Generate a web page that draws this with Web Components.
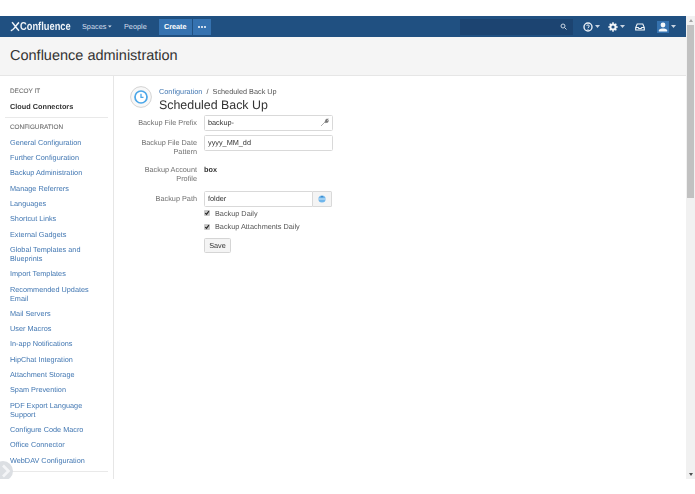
<!DOCTYPE html>
<html lang="en"><head><meta charset="utf-8"><title>Scheduled Back Up</title>
<style>
html,body{margin:0;padding:0;height:494px;overflow:hidden;background:#fff;font-family:"Liberation Sans",Arial,sans-serif;color:#333;text-rendering:geometricPrecision}
body{display:flex;flex-direction:column}
</style></head><body>
<app-shell></app-shell>
<script>
function def(name,html,init){
  customElements.define(name,class extends HTMLElement{
    constructor(){super();this.attachShadow({mode:'open'}).innerHTML=html}
    connectedCallback(){if(init)init(this)}
  });
}
const caret=c=>`<svg width="5" height="3" viewBox="0 0 5 3"><path d="M0 0h5L2.5 3z" fill="${c}"/></svg>`;

def('app-header',`<style>
:host{display:flex;align-items:center;height:21px;background:#205081;color:#d2dcea;font-size:7.3px;box-sizing:border-box;flex:none;padding:0 10px}
.logo{display:flex;align-items:center;width:72px;color:#eef3f8;flex:none}
.logo svg{flex:none}
.logo span{display:inline-block;font-size:11.5px;font-weight:700;transform:scaleX(.81);transform-origin:0 50%;white-space:nowrap}
.nav{display:flex;align-items:center}
.i{display:flex;align-items:center;gap:2px}
.create{background:#3572b0;color:#fff;font-weight:700;height:16px;display:flex;align-items:center;justify-content:center;width:33px;margin-left:12px}
.more{background:#3572b0;color:#fff;height:16px;width:18px;margin-left:1px;display:flex;align-items:center;justify-content:center;gap:1px}
.more b{width:2px;height:2px;border-radius:50%;background:#fff}
.sp{flex:1}
.search{width:113px;height:16px;background:#1c4471;display:flex;align-items:center;justify-content:flex-end;padding-right:6px;box-sizing:border-box;margin-right:10px}
.ic{display:flex;align-items:center;gap:2px}
</style>
<div class="logo"><svg width="10" height="11" viewBox="0 0 10 11"><path d="M2 1.300C4 3 6 7 9 9.700M9 1.300C7.500 2.500 5.800 5.200 4.500 6.900 3.500 8.200 2.300 9.300 .8 9.700" fill="none" stroke="#eef3f8" stroke-width="1.500"/></svg><span>Confluence</span></div>
<div class="nav"><span class="i" style="width:30px">Spaces ${caret('#d2dcea')}</span><span class="i" style="margin-left:12px">People</span><span class="create">Create</span><span class="more"><b></b><b></b><b></b></span></div>
<div class="sp"></div>
<div class="search"><svg width="7" height="7" viewBox="0 0 7 7"><circle cx="3" cy="3" r="2" fill="none" stroke="#c9d4e2" stroke-width="1"/><path d="M4.500 4.500 6.500 6.500" stroke="#c9d4e2" stroke-width="1"/></svg></div>
<span class="ic" style="margin-right:8px"><svg width="10" height="10" viewBox="0 0 10 10"><circle cx="5" cy="5" r="4" fill="none" stroke="#e8eef5" stroke-width="1.400"/><path d="M3.600 3.800C3.800 2.600 6.300 2.600 6.300 4 6.300 5 5 5 5 6.200" fill="none" stroke="#e8eef5" stroke-width="1"/><circle cx="5" cy="7.500" r=".6" fill="#e8eef5"/></svg>${caret('#c9d4e2')}</span>
<span class="ic" style="margin-right:10px"><svg width="10" height="10" viewBox="0 0 10 10"><circle cx="5" cy="5" r="2.600" fill="none" stroke="#f1f5f9" stroke-width="2"/><path d="M5 .3v2M5 7.700v2M.3 5h2M7.700 5h2M1.700 1.700l1.400 1.400M6.900 6.900l1.400 1.400M8.300 1.700 6.900 3.100M3.100 6.900 1.700 8.300" stroke="#f1f5f9" stroke-width="1.500"/></svg>${caret('#c9d4e2')}</span>
<span class="ic" style="margin-right:12px"><svg width="10" height="8" viewBox="0 0 10 8"><path d="M2.200 1h5.600L9.300 4.500V7H.7V4.500zM.7 4.500h2.600l.5 1h2.400l.5-1h2.600" fill="none" stroke="#f1f5f9" stroke-width="1.100"/></svg></span>
<span class="ic"><svg width="12" height="12" viewBox="0 0 12 12"><rect width="12" height="12" fill="#3572b0"/><circle cx="6" cy="4" r="2.400" fill="#f4f7fa"/><path d="M1.800 10.500V9C3 7.800 4.500 7.600 6 7.600S9 7.800 10.200 9v1.500z" fill="#f4f7fa"/></svg>${caret('#c9d4e2')}</span>`);

def('page-title',`<style>
:host{display:flex;align-items:center;height:39px;box-sizing:border-box;background:#f5f5f5;border-bottom:1px solid #e6e6e6;padding:0 0 0 10px;font-size:14.500px;color:#333;flex:none}
</style><slot></slot>`);

def('side-head',`<style>:host{display:block;font-size:6.400px;color:#707070;line-height:11px;padding:0 0 2px;-webkit-text-stroke:.1px #707070}</style><slot></slot>`);
def('side-link',`<style>:host{display:block;font-size:7.300px;line-height:9.100px;padding:3.100px 0;color:#4277b2}
:host([current]){color:#333;font-weight:700}</style><slot></slot>`);
def('side-sep',`<style>:host{display:block;height:1px;background:#e9e9e9;margin:3px 0 3.500px -5px;width:103px}</style>`);

def('admin-sidebar',`<style>
:host{display:block;width:114px;box-sizing:border-box;border-right:1px solid #e6e6e6;padding:10px 5px 0 10px;flex:none;overflow:hidden}
</style><slot></slot>`);

def('form-row',`<style>
:host{display:grid;grid-template-columns:66px 1fr;column-gap:7px;align-items:start;margin-left:17px}
.l{font-size:7.300px;line-height:9.300px;color:#707070;text-align:right;padding-top:var(--lt,3px)}
.c{min-width:0;font-size:7.300px}
</style><div class="l"><slot name="label"></slot></div><div class="c"><slot></slot></div>`);

def('text-input',`<style>
:host{display:flex;align-items:center;width:129px;height:15.500px;box-sizing:border-box;border:1px solid #d9d9d9;border-radius:1.500px;background:#fff;font-size:7.300px;color:#333;padding:0 3px;justify-content:space-between}
</style><slot></slot><slot name="icon"></slot>`);

def('check-row',`<style>
:host{display:flex;align-items:center;gap:5px;font-size:7.300px;color:#555;height:13.500px}
svg{flex:none}
</style><svg width="6" height="6" viewBox="0 0 6 6"><rect width="6" height="6" rx="1" fill="#c8c8c8"/><path d="M1.200 3 2.500 4.400 4.900 1.200" fill="none" stroke="#222" stroke-width="1.100"/></svg><slot></slot>`);

def('aui-button',`<style>
:host{display:inline-flex;align-items:center;justify-content:center;height:15.500px;width:27px;box-sizing:border-box;border:1px solid #d5d5d5;border-radius:1.500px;background:#f4f4f4;font-size:7.300px;color:#333}
</style><slot></slot>`);

def('page-heading',`<style>
:host{display:flex;align-items:flex-start;gap:7px;margin-left:16px}
.t{display:flex;flex-direction:column;margin-top:1px}
.bc{font-size:7.300px;line-height:10px;color:#555;margin-bottom:1px}
.bc a{color:#4277b2}
.h{font-size:12.400px;line-height:14px;color:#333}
svg{flex:none}
</style>
<svg width="22" height="22" viewBox="0 0 22 22"><circle cx="11" cy="11" r="10.400" fill="#f8f8f8" stroke="#cfcfcf" stroke-width=".9"/><circle cx="11" cy="11" r="6" fill="#fff" stroke="#4aa6e8" stroke-width="1.700"/><path d="M11 7.800V11.300H13.500" fill="none" stroke="#4aa6e8" stroke-width="1.300"/></svg>
<div class="t"><div class="bc"><a>Configuration</a>&nbsp; /&nbsp; Scheduled Back Up</div><div class="h">Scheduled Back Up</div></div>`);

def('backup-form',`<style>
:host{display:block;padding:3px 0 0}
.g{display:flex;flex-direction:column}
.path{display:flex;width:128px}
.pick{width:19px;height:15.500px;box-sizing:border-box;border:1px solid #d9d9d9;border-left:none;background:#f4f4f4;display:flex;align-items:center;justify-content:center;border-radius:0 1.500px 1.500px 0}
</style>
<div class="g">
<form-row style="height:20px"><span slot="label">Backup File Prefix</span><text-input>backup-<svg slot="icon" width="9" height="9" viewBox="0 0 9 9"><path d="M1 8 5.500 3.500M5 4 6 1.300 8.300 1 6.900 2.400 7.600 3.200 8.500 2.400 7.800 4.300 5.500 4.700z" fill="#777" stroke="#777" stroke-width=".6"/></svg></text-input></form-row>
<form-row style="height:30px"><span slot="label">Backup File Date<br>Pattern</span><text-input>yyyy_MM_dd</text-input></form-row>
<form-row style="height:26px;--lt:0"><span slot="label">Backup Account<br>Profile</span><span style="font-weight:700;display:block;line-height:9.300px">box</span></form-row>
<form-row style="height:15.500px"><span slot="label">Backup Path</span><div class="path"><text-input style="width:109px;border-radius:1.500px 0 0 1.500px">folder</text-input><div class="pick"><svg width="8" height="8" viewBox="0 0 8 8"><circle cx="4" cy="4" r="3.600" fill="#6fb6ec"/><path d="M.6 4h6.800" stroke="#e8f4fc" stroke-width=".8"/><path d="M2.500 2.300h3L4 .8z" fill="#2f7fc2"/></svg></div></div></form-row>
<form-row style="height:13.500px"><span slot="label"></span><check-row>Backup Daily</check-row></form-row>
<form-row style="height:13.500px"><span slot="label"></span><check-row>Backup Attachments Daily</check-row></form-row>
<form-row style="margin-top:4px"><span slot="label"></span><aui-button>Save</aui-button></form-row>
</div>`);

def('fake-scrollbar',`<style>
:host{display:flex;flex-direction:column;width:9px;flex:none;background:#f1f1f1}
.a{height:9px;display:flex;align-items:center;justify-content:center;flex:none}
.t{height:173px;background:#c1c1c1;flex:none;margin:0 1px}
.s{flex:1}
</style><div class="a"><svg width="4" height="3" viewBox="0 0 4 3"><path d="M0 3 2 0 4 3z" fill="#a3a3a3"/></svg></div><div class="t"></div><div class="s"></div><div class="a"><svg width="4" height="3" viewBox="0 0 4 3"><path d="M0 0 2 3 4 0z" fill="#505050"/></svg></div>`);

def('app-shell',`<style>
:host{display:block;height:494px;width:695px;box-sizing:border-box;padding:16px 0 15px;filter:blur(.35px)}
.frame{display:flex;height:100%;position:relative;overflow:hidden}
.main{flex:1;min-width:0;display:flex;flex-direction:column}
.body{flex:1;display:flex;min-height:0}
.content{flex:1;padding-top:10px}
.collapse{position:absolute;left:-7px;top:445px;width:20px;height:20px;border-radius:50%;background:#dcdfe3;display:flex;align-items:center;justify-content:center}
</style>
<div class="frame"><div class="main">
<app-header></app-header>
<page-title>Confluence administration</page-title>
<div class="body">
<admin-sidebar>
<side-head>DECOY IT</side-head>
<side-link current>Cloud Connectors</side-link>
<side-sep></side-sep>
<side-head>CONFIGURATION</side-head>
<side-link>General Configuration</side-link>
<side-link>Further Configuration</side-link>
<side-link>Backup Administration</side-link>
<side-link>Manage Referrers</side-link>
<side-link>Languages</side-link>
<side-link>Shortcut Links</side-link>
<side-link>External Gadgets</side-link>
<side-link>Global Templates and Blueprints</side-link>
<side-link>Import Templates</side-link>
<side-link>Recommended Updates Email</side-link>
<side-link>Mail Servers</side-link>
<side-link>User Macros</side-link>
<side-link>In-app Notifications</side-link>
<side-link>HipChat Integration</side-link>
<side-link>Attachment Storage</side-link>
<side-link>Spam Prevention</side-link>
<side-link>PDF Export Language Support</side-link>
<side-link>Configure Code Macro</side-link>
<side-link>Office Connector</side-link>
<side-link>WebDAV Configuration</side-link>
<side-sep></side-sep>
</admin-sidebar>
<div class="content"><page-heading></page-heading><backup-form></backup-form></div>
</div></div>
<fake-scrollbar></fake-scrollbar>
<div class="collapse"><svg width="10" height="14" viewBox="0 0 10 14" style="margin-left:6px"><path d="M2 1.500 7.500 7 2 12.500" fill="none" stroke="#f4f5f7" stroke-width="2.600"/></svg></div></div>`);
</script>
</body></html>
